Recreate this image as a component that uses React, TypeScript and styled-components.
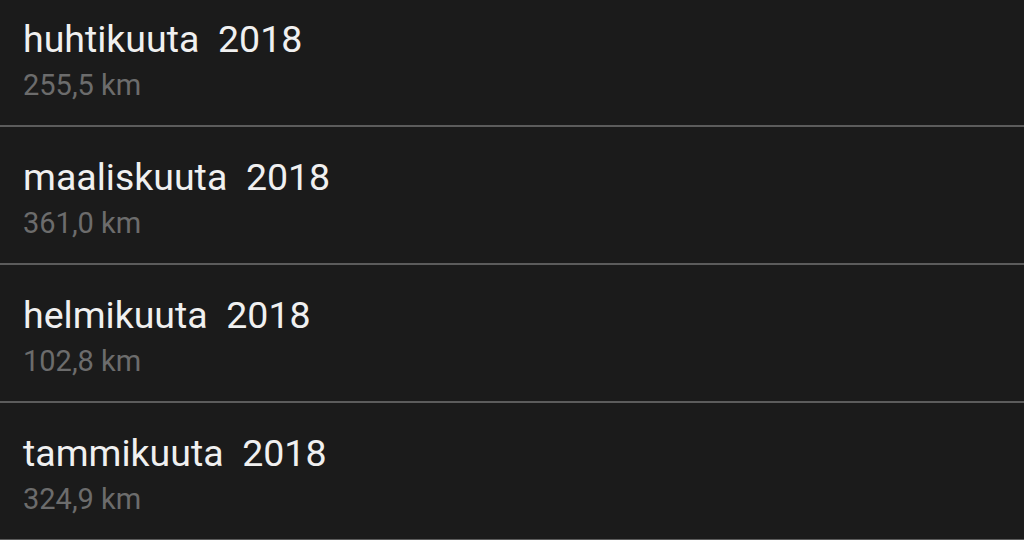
import React from 'react';
import styled, { createGlobalStyle } from 'styled-components';

interface IMonthEntry {
  month: string;
  year: number;
  distance: string;
}

const entries: IMonthEntry[] = [
  { month: 'huhtikuuta', year: 2018, distance: '255,5 km' },
  { month: 'maaliskuuta', year: 2018, distance: '361,0 km' },
  { month: 'helmikuuta', year: 2018, distance: '102,8 km' },
  { month: 'tammikuuta', year: 2018, distance: '324,9 km' },
];

const App = () => {
  return (
    <>
      <GlobalStyle />
      <Viewport>
        <MonthList>
          {entries.map((item) => (
            <MonthRow key={item.month}>
              <MonthTitle>{`${item.month}  ${item.year}`}</MonthTitle>
              <Distance>{item.distance}</Distance>
            </MonthRow>
          ))}
        </MonthList>
      </Viewport>
    </>
  );
};

export default App;

const GlobalStyle = createGlobalStyle`
  html, body {
    margin: 0;
    padding: 0;
    background-color: #1b1b1b;
  }

  * {
    box-sizing: border-box;
  }
`;

const Viewport = styled.div`
  width: 1024px;
  height: 540px;
  overflow: hidden;
  background-color: #1b1b1b;
  font-family: Roboto, 'Liberation Sans', sans-serif;
`;

// list is scrolled a bit, first row is cut at the top
const MonthList = styled.ul`
  list-style: none;
  margin: -11px 0 0;
  padding: 0;
`;

const MonthRow = styled.li`
  display: flex;
  flex-direction: column;
  height: 138px;
  padding: 29px 22px 0 23px;
  border-bottom: 2px solid #5c5c5c;
`;

const MonthTitle = styled.div`
  font-size: 37.5px;
  line-height: 42px;
  color: #f0f0f0;
  white-space: pre;
`;

const Distance = styled.div`
  margin-top: 8px;
  font-size: 29px;
  line-height: 34px;
  color: #6c6c6c;
`;
